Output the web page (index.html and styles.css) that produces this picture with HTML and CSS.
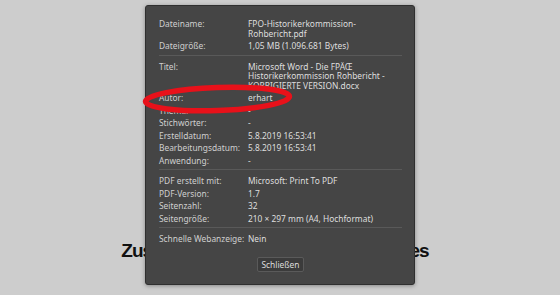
FILE: index.html
```html
<!DOCTYPE html>
<html lang="de">
<head>
    <meta charset="UTF-8">
    <title>Dokumenteigenschaften</title>
    <link rel="stylesheet" href="styles.css">
</head>
<body>
    <div class="page">
        <h2 class="headline">Zusammenfassung des Rohberichtes</h2>
    </div>

    <div class="overlay">
        <div class="dialog">
            <div class="section">
                <div class="label">Dateiname:</div>
                <div class="value">FPO-Historikerkommission-<br>Rohbericht.pdf</div>
                <div class="label">Dateigröße:</div>
                <div class="value">1,05 MB (1.096.681 Bytes)</div>
            </div>
            <div class="section">
                <div class="label">Titel:</div>
                <div class="value">Microsoft Word - Die FPÄŒ<br>Historikerkommission Rohbericht -<br>KORRIGIERTE VERSION.docx</div>
                <div class="label">Autor:</div>
                <div class="value">erhart</div>
                <div class="label">Thema:</div>
                <div class="value">-</div>
                <div class="label">Stichwörter:</div>
                <div class="value">-</div>
                <div class="label">Erstelldatum:</div>
                <div class="value">5.8.2019 16:53:41</div>
                <div class="label">Bearbeitungsdatum:</div>
                <div class="value">5.8.2019 16:53:41</div>
                <div class="label">Anwendung:</div>
                <div class="value">-</div>
            </div>
            <div class="section">
                <div class="label">PDF erstellt mit:</div>
                <div class="value">Microsoft: Print To PDF</div>
                <div class="label">PDF-Version:</div>
                <div class="value">1.7</div>
                <div class="label">Seitenzahl:</div>
                <div class="value">32</div>
                <div class="label">Seitengröße:</div>
                <div class="value">210 × 297 mm (A4, Hochformat)</div>
            </div>
            <div class="section">
                <div class="label">Schnelle Webanzeige:</div>
                <div class="value">Nein</div>
            </div>
            <div class="actions">
                <button class="close-button">Schließen</button>
            </div>

            <!-- red marking drawn over the Autor row -->
            <svg class="marker" viewBox="0 0 160 40" width="160" height="40">
                <ellipse cx="77.5" cy="20" rx="72" ry="11.5" fill="none" stroke="#e8111a" stroke-width="5.5" transform="rotate(-2 77.5 20)"/>
            </svg>
        </div>
    </div>
</body>
</html>
```

FILE: styles.css
```css
* {
    margin: 0;
    padding: 0;
    box-sizing: border-box;
}

body {
    background: #cdcdcd;
    font-family: "Noto Sans", "Open Sans", sans-serif;
    height: 295px;
    overflow: hidden;
}

.page {
    padding: 240px 10px 0 0;
    text-align: center;
}

.headline {
    font-family: "Liberation Sans", Arial, sans-serif;
    font-size: 19px;
    font-weight: bold;
    color: #111;
    letter-spacing: -0.95px;
}

.overlay {
    position: absolute;
    top: 0;
    left: 0;
    right: 0;
    display: flex;
    justify-content: center;
    padding-top: 5px;
}

.dialog {
    position: relative;
    width: 270px;
    height: 280px;
    background: #454545;
    border: 1px solid #2f2f2f;
    border-radius: 3px;
    box-shadow: 0 1px 4px rgba(0, 0, 0, 0.35);
    padding: 7px 12px 0 13px;
    color: #d8d8d8;
    font-size: 8.4px;
    line-height: 9.5px;
}

.section {
    display: grid;
    grid-template-columns: 89px 1fr;
    row-gap: 3px;
    padding: 6px 0 4px;
    border-top: 1px solid #595959;
}

.section:first-child {
    border-top: none;
}

.label {
    color: #cfcfcf;
}

.value {
    color: #dedede;
}

.actions {
    display: flex;
    justify-content: center;
    margin-top: 9px;
}

.close-button {
    font-family: inherit;
    font-size: 8.4px;
    color: #dcdcdc;
    background: #3b3b3b;
    border: 1px solid #5a5a5a;
    border-radius: 2px;
    padding: 2px 3px;
    line-height: 9.5px;
}

.marker {
    position: absolute;
    left: -6px;
    top: 73px;
}
```
